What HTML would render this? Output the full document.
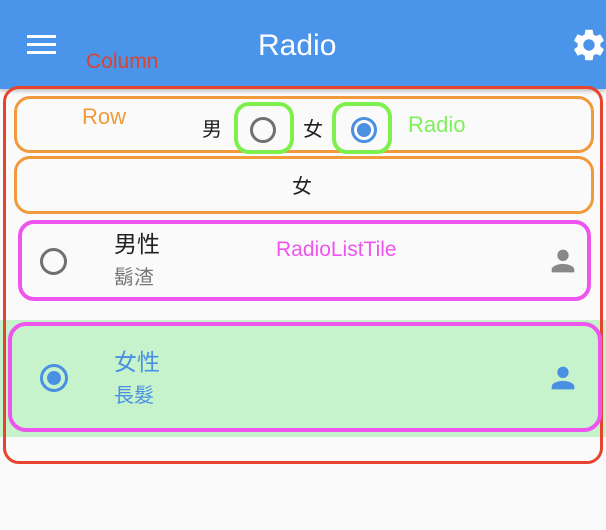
<!DOCTYPE html>
<html><head><meta charset="utf-8"><style>
*{margin:0;padding:0;box-sizing:border-box}
body{width:606px;height:530px;background:#fafafa;position:relative;overflow:hidden;font-family:"Liberation Sans","Noto Sans CJK TC",sans-serif}
.a{position:absolute}
.bar{left:0;top:0;width:606px;height:89px;background:#4a95e9;box-shadow:0 2px 4px rgba(0,0,0,.25)}
.t{white-space:nowrap;line-height:1}
</style></head><body>
<div class="a bar"></div>
<div class="a" style="left:27px;top:35px;width:29px;height:3px;background:#fff"></div>
<div class="a" style="left:27px;top:43px;width:29px;height:3px;background:#fff"></div>
<div class="a" style="left:27px;top:51px;width:29px;height:3px;background:#fff"></div>
<div class="a t" style="left:258px;top:31px;font-size:30px;color:#fff">Radio</div>
<svg class="a" style="left:569px;top:26px" width="40" height="38" viewBox="0 0 24 24"><path fill="#fff" d="M19.14 12.94c.04-.3.06-.61.06-.94 0-.32-.02-.64-.07-.94l2.03-1.58a.49.49 0 0 0 .12-.61l-1.92-3.32a.488.488 0 0 0-.59-.22l-2.390.96c-.5-.38-1.03-.7-1.62-.94l-.36-2.54a.484.484 0 0 0-.48-.41h-3.84c-.24 0-.43.17-.47.41l-.36 2.54c-.59.24-1.13.57-1.62.94l-2.39-.96c-.22-.08-.47 0-.59.22L2.74 8.87c-.12.21-.08.47.12.61l2.03 1.58c-.05.3-.09.63-.09.94s.02.64.07.94l-2.03 1.58a.49.49 0 0 0-.12.61l1.92 3.32c.12.22.37.29.59.22l2.39-.96c.5.38 1.030.7 1.62.94l.36 2.54c.05.24.24.41.48.41h3.84c.24 0 .44-.17.47-.41l.36-2.54c.59-.24 1.13-.56 1.62-.94l2.39.96c.22.08.47 0 .59-.22l1.92-3.32c.12-.22.07-.47-.12-.61l-2.01-1.58zM12 15.6c-1.98 0-3.6-1.62-3.6-3.6s1.62-3.6 3.6-3.6 3.6 1.62 3.6 3.6-1.62 3.6-3.6 3.6z"/></svg>
<div class="a t" style="left:86px;top:51px;font-size:21px;color:#d9442f">Column</div>

<div class="a" style="left:0;top:320px;width:606px;height:117px;background:#c6f3cb"></div>
<div class="a" style="left:3px;top:86px;width:600px;height:378px;border:3px solid #e8432c;border-radius:16px"></div>
<div class="a" style="left:14px;top:96px;width:580px;height:57px;border:3px solid #f09a3c;border-radius:16px"></div>
<div class="a" style="left:14px;top:156px;width:580px;height:58px;border:3px solid #f09a3c;border-radius:16px"></div>
<div class="a t" style="left:82px;top:106px;font-size:22px;color:#f09a3c">Row</div>
<div class="a t" style="left:202px;top:120px;font-size:20px;color:#222">男</div>
<div class="a t" style="left:303px;top:120px;font-size:20px;color:#222">女</div>
<div class="a t" style="left:408px;top:114px;font-size:22px;color:#7ef05a">Radio</div>
<div class="a" style="left:234px;top:102px;width:60px;height:52px;border:4px solid #7ef04e;border-radius:15px"></div>
<div class="a" style="left:332px;top:102px;width:60px;height:52px;border:4px solid #7ef04e;border-radius:15px"></div>
<div class="a" style="left:250px;top:117px;width:26px;height:26px;border:3px solid #707070;border-radius:50%"></div>
<div class="a" style="left:351px;top:117px;width:26px;height:26px;border:3px solid #4a8fe2;border-radius:50%"></div>
<div class="a" style="left:357px;top:123px;width:14px;height:14px;background:#4a8fe2;border-radius:50%"></div>
<div class="a t" style="left:292px;top:177px;font-size:20px;color:#222">女</div>

<div class="a" style="left:18px;top:220px;width:573px;height:81px;border:4px solid #ee55ee;border-radius:16px"></div>
<div class="a" style="left:40px;top:248px;width:27px;height:27px;border:3px solid #707070;border-radius:50%"></div>
<div class="a t" style="left:114px;top:233px;font-size:23px;color:#222">男性</div>
<div class="a t" style="left:114px;top:268px;font-size:20px;color:#777">鬍渣</div>
<div class="a t" style="left:276px;top:239px;font-size:21px;color:#ee55ee">RadioListTile</div>
<svg class="a" style="left:546px;top:244px" width="34" height="34" viewBox="0 0 24 24"><path fill="#888" d="M12 12c2.2 0 4-1.8 4-4s-1.8-4-4-4-4 1.8-4 4 1.8 4 4 4zm0 2c-2.7 0-8 1.3-8 4v2h16v-2c0-2.7-5.3-4-8-4z"/></svg>

<div class="a" style="left:8px;top:322px;width:594px;height:110px;border:4px solid #ee55ee;border-radius:18px"></div>
<div class="a" style="left:40px;top:364px;width:28px;height:28px;border:3px solid #4a8fe2;border-radius:50%"></div>
<div class="a" style="left:47px;top:371px;width:14px;height:14px;background:#4a8fe2;border-radius:50%"></div>
<div class="a t" style="left:114px;top:351px;font-size:23px;color:#4a8fe2">女性</div>
<div class="a t" style="left:114px;top:386px;font-size:20px;color:#4a8fe2">長髮</div>
<svg class="a" style="left:546px;top:361px" width="34" height="34" viewBox="0 0 24 24"><path fill="#4a8fe2" d="M12 12c2.2 0 4-1.8 4-4s-1.8-4-4-4-4 1.8-4 4 1.8 4 4 4zm0 2c-2.7 0-8 1.3-8 4v2h16v-2c0-2.7-5.3-4-8-4z"/></svg>
</body></html>
